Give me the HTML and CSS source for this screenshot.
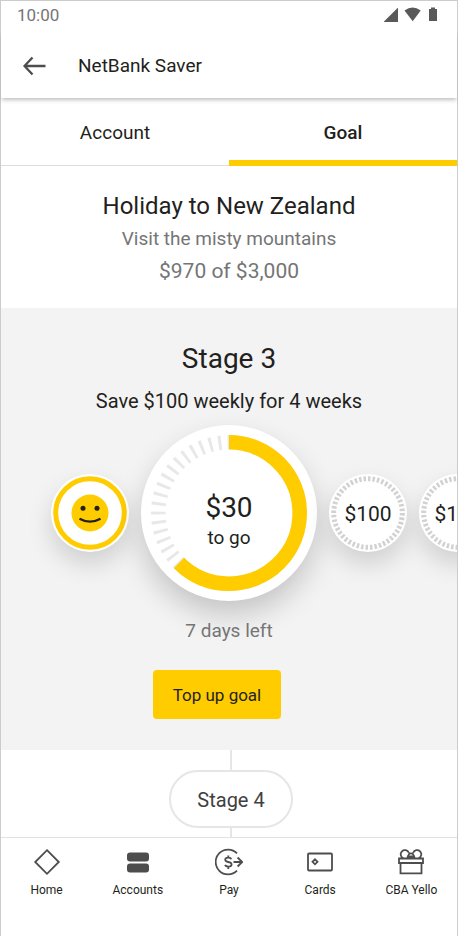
FILE: index.html
```html
<!DOCTYPE html>
<html lang="en">
<head>
<meta charset="utf-8">
<meta name="viewport" content="width=device-width, initial-scale=1">
<title>NetBank Saver</title>
<link rel="stylesheet" href="styles.css">
</head>
<body>
<div class="screen">
  <div class="status">
    <span>10:00</span>
    <svg class="status-icons" viewBox="0 0 54 16" aria-hidden="true">
      <path d="M0 15V14.6L13.6 1H14V15Z"/>
      <path d="M20.5 3.6Q28.500-2.600 36.700 3.600L28.700 14.200Z"/>
      <path d="M45 2H47V.6H51V2H53V14H45Z"/>
    </svg>
  </div>

  <header class="header">
    <button class="back" type="button" aria-label="Back">
      <svg viewBox="0 0 24 20" aria-hidden="true"><path d="M9.500 1.500 1.500 10l8 8.500M1.500 10h21"/></svg>
    </button>
    <h1 class="title">NetBank Saver</h1>
  </header>

  <div class="tabs" role="tablist">
    <button class="tab" type="button" role="tab" aria-selected="false">Account</button>
    <button class="tab tab-active" type="button" role="tab" aria-selected="true">Goal</button>
  </div>

  <main class="main">
    <section class="summary">
      <h2 class="heading">Holiday to New Zealand</h2>
      <p>Visit the misty mountains</p>
      <p class="figures">$970 of $3,000</p>
    </section>

    <section class="stage">
      <h2 class="stage-title">Stage 3</h2>
      <p class="plan">Save $100 weekly for 4 weeks</p>
      <div class="weeks">
        <div class="side side-before">
          <div class="disc">
            <svg viewBox="0 0 78 78" role="img" aria-label="Week complete">
              <circle class="ring-done" cx="39" cy="39" r="34.300"/>
              <circle class="face" cx="39" cy="39" r="18.500"/>
              <circle class="ink" cx="32" cy="34.300" r="2.500"/>
              <circle class="ink" cx="46" cy="34.300" r="2.500"/>
              <path class="smile" d="M28.500 44.800Q39 50.600 49.500 44.800"/>
            </svg>
          </div>
        </div>
        <div class="disc disc-current">
          <svg viewBox="0 0 176 176" aria-hidden="true">
            <circle class="ticks" cx="88" cy="88" r="70.700" pathLength="360"/>
            <circle class="progress" cx="88" cy="88" r="70.700" pathLength="360"/>
          </svg>
          <div class="disc-text">
            <strong class="amount">$30</strong>
            <span class="togo">to go</span>
          </div>
        </div>
        <div class="side">
          <div class="disc">
            <svg viewBox="0 0 78 78" aria-hidden="true"><circle class="ring-todo" cx="39" cy="39" r="34.300" pathLength="480"/></svg>
            <span class="disc-text figures">$100</span>
          </div>
          <div class="disc">
            <svg viewBox="0 0 78 78" aria-hidden="true"><circle class="ring-todo" cx="39" cy="39" r="34.300" pathLength="480"/></svg>
            <span class="disc-text figures">$100</span>
          </div>
        </div>
      </div>
      <p class="days">7 days left</p>
      <button class="topup" type="button">Top up goal</button>
    </section>

    <section class="next">
      <button class="pill" type="button">Stage 4</button>
    </section>
  </main>

  <nav class="nav">
    <a class="nav-item" href="#home">
      <svg viewBox="0 0 28 28" aria-hidden="true"><path class="line" d="M14 2.200 25.800 14 14 25.800 2.200 14Z"/></svg>
      Home
    </a>
    <a class="nav-item" href="#accounts">
      <svg viewBox="0 0 28 28" aria-hidden="true"><rect class="solid" x="3" y="4.500" width="22" height="9" rx="3"/><rect class="solid" x="3" y="15.500" width="22" height="9" rx="3"/></svg>
      Accounts
    </a>
    <a class="nav-item" href="#pay">
      <svg viewBox="0 0 28 28" aria-hidden="true"><path class="line" d="M22 5.400A12.400 12.400 0 1 0 22 22.600M18.500 14h8.500M22.600 9.500 27.200 14l-4.600 4.500"/><path class="line" d="M16.400 11.200Q15.800 9.600 13.300 9.600 10.200 9.600 10.200 11.800 10.200 13.500 13.300 14 16.600 14.500 16.600 16.500 16.600 18.600 13.300 18.600 10.600 18.600 10 16.900M13.300 7.400v2.200M13.300 18.600v2.400"/></svg>
      Pay
    </a>
    <a class="nav-item" href="#cards">
      <svg viewBox="0 0 28 28" aria-hidden="true"><rect class="line" x="2" y="5.500" width="24" height="17" rx="1"/><path class="line" d="M9 11.300 11.500 13.800 9 16.300 6.500 13.800Z"/></svg>
      Cards
    </a>
    <a class="nav-item" href="#yello">
      <svg viewBox="0 0 28 28" aria-hidden="true"><path class="line" d="M2 10.500h24v4.500H2ZM3.500 15h21v10.300h-21ZM6.300 10.200A4.200 4.200 0 1 1 11.800 4.800M21.700 10.200A4.200 4.200 0 1 0 16.200 4.800M10.300 10.300Q11.300 5.400 14 5.400 16.700 5.400 17.700 10.300M11.800 4.800 13 6M16.200 4.800 15 6M10.300 10.300 12.500 8.500H15.500L17.700 10.300"/></svg>
      CBA Yello
    </a>
  </nav>
</div>
</body>
</html>
```
FILE: styles.css
```css
* {
  box-sizing: border-box;
}

body {
  margin: 0;
  background: #fff;
  color: #231f20;
  font-family: Roboto, "Liberation Sans", sans-serif;
  font-size: 19px;
  line-height: 24px;
}

h1, h2, p {
  margin: 0;
  font-weight: 400;
}

button {
  border: 0;
  padding: 0;
  background: none;
  color: inherit;
  font: inherit;
}

.screen {
  display: flex;
  flex-direction: column;
  min-height: 100vh;
  border: 1px solid #ccc;
}

.status {
  display: flex;
  align-items: center;
  justify-content: space-between;
  padding: 2px 19px 5px 16px;
  color: #757575;
  font-size: 17px;
}

.status-icons {
  width: 54px;
  height: 16px;
  fill: #595959;
}

.header {
  display: flex;
  align-items: center;
  gap: 31px;
  padding: 22px 22px 20px;
  box-shadow: 0 3px 4px -1px rgba(0, 0, 0, 0.25);
}

.back {
  display: flex;
}

.back svg {
  width: 24px;
  height: 20px;
  fill: none;
  stroke: #4d4d4d;
  stroke-width: 2.3;
}

.title {
  font-size: 19px;
}

.tabs {
  display: grid;
  grid-template-columns: 1fr 1fr;
}

.tab {
  padding: 23px 0 20px;
  border-bottom: 1px solid #ddd;
}

.tab-active {
  padding-bottom: 15px;
  border-bottom: 6px solid #fc0;
  font-weight: 500;
}

.summary {
  padding: 24px 16px 20px;
  text-align: center;
  color: #757575;
}

.summary p {
  line-height: 33px;
}

.figures {
  font-size: 21px;
}

.heading {
  color: #231f20;
  font-size: 24px;
  line-height: 32px;
}

.stage {
  display: flex;
  flex-direction: column;
  align-items: center;
  padding: 35px 0 31px;
  overflow: hidden;
  background: #f3f3f3;
}

.stage-title {
  font-size: 28px;
  line-height: 32px;
}

.plan {
  margin-top: 14px;
  font-size: 20px;
}

.weeks {
  display: grid;
  grid-template-columns: minmax(0, 1fr) auto minmax(0, 1fr);
  align-items: center;
  gap: 12px;
  width: 100%;
  margin-top: 12px;
}

.side {
  display: flex;
  gap: 12px;
}

.side-before {
  justify-content: flex-end;
}

.disc {
  display: grid;
  flex: none;
  place-items: center;
  width: 78px;
  height: 78px;
  border-radius: 50%;
  background: #fff;
  box-shadow: 0 12px 24px rgba(0, 0, 0, 0.15);
}

.disc-current {
  width: 176px;
  height: 176px;
  box-shadow: 0 14px 28px rgba(0, 0, 0, 0.19);
}

.disc svg,
.disc-text {
  grid-area: 1 / 1;
}

.disc-text {
  padding-top: 2px;
}

.disc svg {
  width: 100%;
  height: 100%;
  fill: none;
}

.disc-current .disc-text {
  display: flex;
  flex-direction: column;
  align-items: center;
  padding-top: 18px;
}

.amount {
  font-size: 28px;
  font-weight: 400;
  line-height: 32px;
}

.togo {
  line-height: 28px;
}

.ring-done {
  stroke: #fc0;
  stroke-width: 5;
}

.disc .face {
  fill: #fc0;
}

.disc .ink {
  fill: #231f20;
}

.smile {
  stroke: #231f20;
  stroke-width: 2.2;
}

.ticks,
.progress {
  stroke-width: 14.6;
  transform: rotate(-90deg);
  transform-origin: center;
}

.ticks {
  stroke: #e8e8e8;
  stroke-dasharray: 2.4 5.1;
  stroke-dashoffset: 1.2;
}

.progress {
  stroke: #fc0;
  stroke-dasharray: 225 135;
}

.ring-todo {
  stroke: #d2d2d2;
  stroke-width: 5;
  stroke-dasharray: 5.6 4.4;
}

.days {
  margin-top: 18px;
  color: #757575;
}

.topup {
  margin: 27px 24px 0 0;
  padding: 13px 20px 12px;
  border-radius: 4px;
  background: #fc0;
  font-size: 17px;
}

.next {
  display: flex;
  flex-direction: column;
  align-items: center;
  padding-left: 4px;
}

.next::before,
.next::after {
  content: "";
  width: 2px;
  background: #e6e6e6;
}

.next::before {
  height: 20px;
}

.next::after {
  height: 9px;
}

.pill {
  padding: 16px 26px 14px;
  border: 2px solid #e6e6e6;
  border-radius: 29px;
  color: #404040;
  font-size: 20px;
}

.nav {
  display: grid;
  grid-template-columns: repeat(5, 1fr);
  padding: 10px 0 36px;
  border-top: 1px solid #e2e2e2;
}

.nav-item {
  display: flex;
  flex-direction: column;
  align-items: center;
  gap: 4px;
  color: #231f20;
  font-size: 12px;
  line-height: 20px;
  text-decoration: none;
}

.nav svg {
  width: 28px;
  height: 28px;
  fill: none;
}

.line {
  stroke: #4d4d4d;
  stroke-width: 1.8;
}

.nav .solid {
  fill: #4d4d4d;
}
```
